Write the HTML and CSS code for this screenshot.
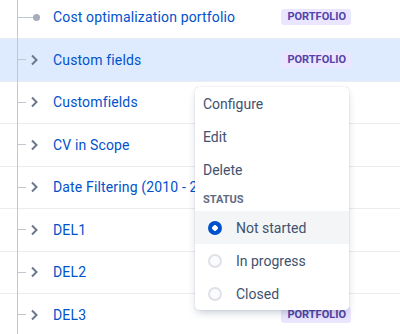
FILE: index.html
```html
<!DOCTYPE html>
<html>
<head>
    <meta charset="UTF-8">
    <title>Portfolio tree</title>
    <link rel="stylesheet" href="styles.css">
</head>
<body>
    <div class="tree">
        <div class="row">
            <span class="guide"></span>
            <span class="stem long"></span>
            <span class="dot"></span>
            <span class="name">Cost optimalization portfolio</span>
            <span class="lozenge">Portfolio</span>
        </div>
        <div class="row selected">
            <span class="guide"></span>
            <span class="stem"></span>
            <svg class="chevron" viewBox="0 0 16 16"><polyline points="6,3.5 10.5,8 6,12.5"/></svg>
            <span class="name">Custom fields</span>
            <span class="lozenge">Portfolio</span>
        </div>
        <div class="row">
            <span class="guide"></span>
            <span class="stem"></span>
            <svg class="chevron" viewBox="0 0 16 16"><polyline points="6,3.5 10.5,8 6,12.5"/></svg>
            <span class="name">Customfields</span>
        </div>
        <div class="row">
            <span class="guide"></span>
            <span class="stem"></span>
            <svg class="chevron" viewBox="0 0 16 16"><polyline points="6,3.5 10.5,8 6,12.5"/></svg>
            <span class="name">CV in Scope</span>
        </div>
        <div class="row">
            <span class="guide"></span>
            <span class="stem"></span>
            <svg class="chevron" viewBox="0 0 16 16"><polyline points="6,3.5 10.5,8 6,12.5"/></svg>
            <span class="name">Date Filtering (2010 - 2020)</span>
        </div>
        <div class="row">
            <span class="guide"></span>
            <span class="stem"></span>
            <svg class="chevron" viewBox="0 0 16 16"><polyline points="6,3.5 10.5,8 6,12.5"/></svg>
            <span class="name">DEL1</span>
        </div>
        <div class="row">
            <span class="guide"></span>
            <span class="stem"></span>
            <svg class="chevron" viewBox="0 0 16 16"><polyline points="6,3.5 10.5,8 6,12.5"/></svg>
            <span class="name">DEL2</span>
        </div>
        <div class="row">
            <span class="guide"></span>
            <span class="stem"></span>
            <svg class="chevron" viewBox="0 0 16 16"><polyline points="6,3.5 10.5,8 6,12.5"/></svg>
            <span class="name">DEL3</span>
            <span class="lozenge">Portfolio</span>
        </div>
    </div>

    <div class="menu">
        <div class="menu-item">Configure</div>
        <div class="menu-item">Edit</div>
        <div class="menu-item">Delete</div>
        <div class="menu-heading">Status</div>
        <div class="menu-item radio-item active">
            <span class="radio-box"><span class="radio checked"></span></span>
            Not started
        </div>
        <div class="menu-item radio-item">
            <span class="radio-box"><span class="radio"></span></span>
            In progress
        </div>
        <div class="menu-item radio-item">
            <span class="radio-box"><span class="radio"></span></span>
            Closed
        </div>
    </div>
</body>
</html>
```

FILE: styles.css
```css
body {
    margin: 0;
    font-family: Roboto, "Liberation Sans", sans-serif;
    background: #fff;
    overflow: hidden;
}
.tree {
    margin-top: -3.5px;
}
.row {
    display: flex;
    align-items: center;
    height: 41.5px;
    padding-right: 49px;
    border-bottom: 1px solid #ebecf0;
}
.row.selected {
    background-color: #deebff;
}
.guide {
    align-self: stretch;
    width: 1px;
    margin: 0 0 -1px 17px;
    background-color: #c1c7d0;
}
.stem {
    width: 8px;
    height: 1px;
    background-color: #c1c7d0;
}
.stem.long {
    width: 15px;
}
.dot {
    width: 7px;
    height: 7px;
    margin-right: 13px;
    border-radius: 50%;
    background-color: #a5adba;
}
.chevron {
    width: 16px;
    height: 16px;
    margin-right: 11px;
    fill: none;
    stroke: #6b778c;
    stroke-width: 2;
}
.name {
    flex: 1;
    white-space: nowrap;
    font-size: 14px;
    letter-spacing: 0.15px;
    color: #0052cc;
}
.lozenge {
    height: 16px;
    line-height: 16px;
    padding: 0 5px 0 6px;
    border-radius: 3px;
    background-color: #eae6ff;
    color: #5243aa;
    font-size: 11px;
    font-weight: 700;
    text-transform: uppercase;
}
.menu {
    position: absolute;
    left: 195px;
    top: 87px;
    width: 154px;
    background: #fff;
    border-radius: 4px;
    box-shadow: 0 4px 8px -2px rgba(9, 30, 66, 0.25), 0 0 1px rgba(9, 30, 66, 0.31);
    overflow: hidden;
}
.menu-item {
    display: flex;
    align-items: center;
    height: 33px;
    padding: 0 8px;
    font-size: 14px;
    color: #42526e;
}
.menu-item.active {
    background-color: #f4f5f7;
}
.menu-heading {
    display: flex;
    align-items: center;
    height: 25px;
    padding: 2px 8px 0;
    box-sizing: border-box;
    font-size: 11px;
    font-weight: 700;
    color: #5e6c84;
    text-transform: uppercase;
}
.radio-box {
    display: flex;
    align-items: center;
    justify-content: center;
    width: 24px;
    height: 24px;
    margin-right: 9px;
}
.radio {
    box-sizing: border-box;
    width: 14px;
    height: 14px;
    border-radius: 50%;
    border: 2px solid #dfe1e6;
    background-color: #fafbfc;
}
.radio.checked {
    border-color: #0052cc;
    background: radial-gradient(circle, #fff 2.5px, #0052cc 3px);
}
```
